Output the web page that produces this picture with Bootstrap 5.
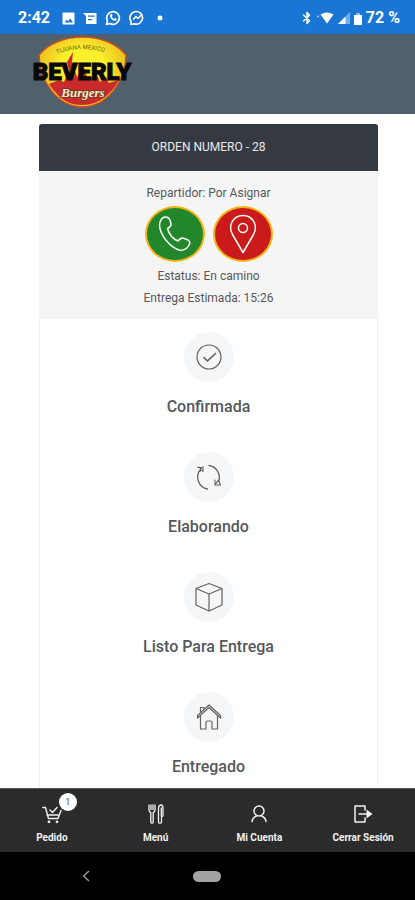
<!DOCTYPE html>
<html lang="es">
<head>
<meta charset="utf-8">
<meta name="viewport" content="width=device-width, initial-scale=1">
<title>Beverly Burgers - Orden</title>
<link href="https://cdn.jsdelivr.net/npm/bootstrap@5.3.0/dist/css/bootstrap.min.css" rel="stylesheet">
<style>
body { font-family: Roboto, "Liberation Sans", sans-serif; color: #55585c; background: #fff; }
svg { display: block; }
.ln { fill: none; stroke: currentColor; stroke-linecap: round; stroke-linejoin: round; }
.status-bar { background: #1976d5; height: 34px; font-size: 16px; line-height: 20px; padding: 2px 15px 0 18px; }
.brand-bar { background: #51606d; height: 80px; padding: 0 32px; }
.order-wrap { padding: 10px 37px 0 39px; }
.order-box { border: 1px solid #f0f1f2; border-top: 0; }
.order-title { background: #353a42; color: #e9eaeb; font-size: 12px; line-height: 15px; padding: 16px 0; margin: 0 -1px; border-radius: 3px 3px 0 0; font-weight: 400; }
.order-info { background: #f5f5f5; font-size: 12px; line-height: 22px; padding: 11px 0 10px; margin: 0 -1px; }
.contact-row { margin: 2px 0 3px; }
.round-btn { width: 60px; height: 56px; border: 2px solid #f4b415; border-radius: 50%; color: #f5fff5; padding: 0; }
.call { background: #22862a; }
.place { background: #cb1a1b; }
.step { padding-top: 13px; height: 120px; }
.step-dot { width: 50px; height: 50px; border-radius: 50%; background: #f5f6f7; color: #606367; }
.step-name { font-size: 16px; line-height: 20px; font-weight: 500; margin: 15px 0 0; }
.tab-bar { background: #2b2b2b; border-top: 1px solid #555; height: 64px; }
.tab-link { color: #f2f2f2; font-size: 10px; line-height: 12px; font-weight: 700; padding-top: 15px; gap: 8px; }
.count { width: 18px; height: 18px; left: 17px; top: -11px; background: #fff; color: #555; font-size: 9px; line-height: 18px; font-weight: 400; }
.system-bar { background: #000; height: 48px; }
.system-btn { color: #999; }
.home-pill { width: 28px; height: 11px; background: #a3a3a3; }
</style>
<script src="https://cdn.jsdelivr.net/npm/bootstrap@5.3.0/dist/js/bootstrap.bundle.min.js"></script>
</head>
<body>
<div class="vh-100 d-flex flex-column overflow-hidden">
  <div class="status-bar d-flex align-items-center justify-content-between text-white flex-shrink-0">
    <div class="d-flex align-items-center gap-2">
      <span class="me-1 fw-bold">2:42</span>
      <svg width="13" height="13" viewBox="0 0 13 13"><path fill="#fff" fill-rule="evenodd" d="M1.500 0.500h10q1 0 1 1v10q0 1-1 1h-10q-1 0-1-1v-10q0-1 1-1zM2.500 10.500h8.500l-2.800-4-2 2.700-1.400-1.700z"/></svg>
      <svg width="14" height="13" viewBox="0 0 14 13"><path fill="#fff" fill-rule="evenodd" d="M0 1h13.500v11H3V4zM5 3.500v1.200h6.500V3.500zM5 7v1.200h4V7z"/></svg>
      <svg width="16" height="16" viewBox="0 0 16 16"><path class="ln" stroke-width="1.700" d="M1.500 14.500l1-3.500a6.300 6.300 0 1 1 2.500 2.500z"/><path fill="#fff" d="M5.500 4.200q1-.8 1.500 0l.6 1.500-.8 1q.8 1.500 2.300 2.200l1-.9 1.700.9q.3 1.300-1.300 1.900-1.500.3-3.700-1.500Q4.300 6.600 5.500 4.200z"/></svg>
      <svg width="16" height="16" viewBox="0 0 16 16"><path class="ln" stroke-width="1.600" d="M2 14.500v-3.200a6.300 6.300 0 1 1 3 2.400z"/><path class="ln" stroke-width="1.600" d="M4.500 9.200l2.400-2.700 2 1.900 2.700-2.600"/></svg>
      <svg class="ms-1" width="6" height="6" viewBox="0 0 6 6"><circle cx="3" cy="3" r="2.500" fill="#fff"/></svg>
    </div>
    <div class="d-flex align-items-center gap-1">
      <svg width="10" height="14" viewBox="0 0 10 14"><path class="ln" stroke-width="1.500" d="M1.500 4l6 5.800L5 12.500v-11l2.500 2.700-6 5.800"/></svg>
      <svg width="18" height="12" viewBox="0 0 18 12"><path fill="#fff" d="M4.500 2.500Q11 -1.500 17.500 2.500L11 11.500z"/><circle cx="2" cy="4.500" r="1" fill="#a9d1f5"/></svg>
      <svg width="12" height="12" viewBox="0 0 12 12"><path fill="#6fb0ec" d="M0 12L12 0v12z"/><path fill="#fff" d="M0 12L7.500 4.500V12z"/></svg>
      <svg width="8" height="13" viewBox="0 0 8 13"><path fill="#8abef0" d="M2 1h4v2H2z"/><path fill="#fff" d="M0 3h8v10H0z"/></svg>
      <span class="fw-bold">72 %</span>
    </div>
  </div>

  <header class="brand-bar flex-shrink-0">
    <a href="#" class="d-inline-block" aria-label="Beverly Burgers">
      <svg width="100" height="76" viewBox="0 0 100 76">
        <defs>
          <radialGradient id="sun" cx=".5" cy=".4" r=".6"><stop offset=".4" stop-color="#fbf02c"/><stop offset="1" stop-color="#e8b01c"/></radialGradient>
          <path id="arc" d="M25 20Q50 10 77 20"/>
        </defs>
        <path d="M7 21C26-3 75-3 94 21C94 46 76 73 50 73C25 73 7 46 7 21z" fill="url(#sun)" stroke="#c0502a" stroke-width="1.500"/>
        <path d="M17 50L27 46L32 48L37 36L35 28L41 18L40 28L45 43L52 33L56 46L64 39L68 48L74 43L77 49L87 46C80 59 68 71 50 71C33 71 24 60 17 50z" fill="#cb2a2c"/>
        <text font-family="Roboto, sans-serif" font-size="6" fill="#6b5a1a"><textPath href="#arc">TIJUANA MEXICO</textPath></text>
        <text x="50" y="46" text-anchor="middle" font-family="Roboto, sans-serif" font-weight="900" font-size="24" fill="#080808" stroke="#080808" stroke-width="1">BEVERLY</text>
        <text x="51" y="63" text-anchor="middle" font-family="Liberation Serif, serif" font-style="italic" font-weight="700" font-size="13" fill="#f7ecd0" stroke="#7c3a22" stroke-width="2" paint-order="stroke">Burgers</text>
      </svg>
    </a>
  </header>

  <main class="order-wrap flex-grow-1 overflow-hidden">
    <section class="order-box text-center">
      <h1 class="order-title">ORDEN NUMERO - 28</h1>
      <div class="order-info">
        <div>Repartidor: Por Asignar</div>
        <div class="contact-row d-flex justify-content-center gap-2">
          <button type="button" class="round-btn call d-flex align-items-center justify-content-center" aria-label="Llamar">
            <svg width="34" height="38" viewBox="0 0 34 38"><path class="ln" stroke-width="1.500" d="M3 5C5 1 10 1 12 5L13 9Q13 12 9.500 13.500C11 19 15 24 20 26Q22 23 25 23L30 25Q33 27 31 30Q28 36 21 35C12 32 4 22 1.800 13Q1 8 3 5z"/></svg>
          </button>
          <button type="button" class="round-btn place d-flex align-items-center justify-content-center" aria-label="Ubicación">
            <svg width="28" height="40" viewBox="0 0 28 40"><path class="ln" stroke-width="1.500" d="M14 38.500L3.500 20.500C-1.500 11 4.500 1.500 14 1.500S29.500 11 24.500 20.500z"/><circle class="ln" stroke-width="1.500" cx="14" cy="14" r="4.500"/></svg>
          </button>
        </div>
        <div>Estatus: En camino</div>
        <div>Entrega Estimada: 15:26</div>
      </div>

      <div class="step d-flex flex-column align-items-center">
        <div class="step-dot d-flex align-items-center justify-content-center">
          <svg width="28" height="28" viewBox="0 0 28 28"><g class="ln" stroke-width="1.200"><circle cx="14" cy="14" r="12"/><path stroke-width="1.700" d="M9 14.500l3.500 3.500 8-7.500"/></g></svg>
        </div>
        <h2 class="step-name">Confirmada</h2>
      </div>
      <div class="step d-flex flex-column align-items-center">
        <div class="step-dot d-flex align-items-center justify-content-center">
          <svg width="28" height="28" viewBox="0 0 28 28"><g class="ln" stroke-width="1.300"><path d="M12.500 26A12 12 0 0 1 5.500 6.500M14 2.500A12 12 0 0 1 24 17"/><path stroke-width="1.100" d="M2.500 4.500h4l-1.500 4M4 4l4 4.500V3.500M20 17v5h5.500M20 22l3.500-5 2 5"/></g></svg>
        </div>
        <h2 class="step-name">Elaborando</h2>
      </div>
      <div class="step d-flex flex-column align-items-center">
        <div class="step-dot d-flex align-items-center justify-content-center">
          <svg width="30" height="30" viewBox="0 0 30 30"><path class="ln" stroke-width="1.200" d="M15 1.500L28 6.500V23L15 29L2 23V6.500zM2 6.500L15 12L28 6.500M15 12V29"/></svg>
        </div>
        <h2 class="step-name">Listo Para Entrega</h2>
      </div>
      <div class="step d-flex flex-column align-items-center">
        <div class="step-dot d-flex align-items-center justify-content-center">
          <svg width="26" height="28" viewBox="0 0 26 28"><g class="ln" stroke-width="1.200"><path d="M1.500 15L13 4.500L24.500 15M1.500 12.500L13 2L24.500 12.500V15M1.500 12.500V15"/><path d="M4.500 12.500V26H10V19.500Q10 18 11.500 18H14.500Q16 18 16 19.500V26H21.500V12.500M4.500 9.500V4.500H8V6.500"/></g></svg>
        </div>
        <h2 class="step-name">Entregado</h2>
      </div>
    </section>
  </main>

  <nav class="tab-bar flex-shrink-0" aria-label="Principal">
    <div class="row g-0 text-center">
      <a href="#" class="col tab-link d-flex flex-column align-items-center text-decoration-none">
        <span class="position-relative">
          <svg width="20" height="20" viewBox="0 0 20 20"><g class="ln" stroke-width="1.400"><path d="M.8 3.500h2.700l3 11h9.500l3-8M5 11h11"/><path d="M8 6l2.500 2.500L15 3.500"/></g><circle cx="7" cy="17.800" r="1.400" fill="currentColor"/><circle cx="15" cy="17.800" r="1.400" fill="currentColor"/></svg>
          <span class="count position-absolute rounded-circle">1</span>
        </span>
        <span>Pedido</span>
      </a>
      <a href="#" class="col tab-link d-flex flex-column align-items-center text-decoration-none">
        <svg width="16" height="20" viewBox="0 0 16 20"><g class="ln" stroke-width="1.300"><path d="M1 1v5q0 2 1.800 2.500V18q0 1.200 1.200 1.200T5.200 18V8.500Q7 8 7 6V1M3 1v4.500M5 1v4.500"/><path d="M10.500 18V4q.5-3 2.500-3t2 3v7.500q0 1-1.500 1V18q0 1.200-1.500 1.200T10.500 18zM13.300 4v8"/></g></svg>
        <span>Menú</span>
      </a>
      <a href="#" class="col tab-link d-flex flex-column align-items-center text-decoration-none">
        <svg width="18" height="20" viewBox="0 0 18 20"><g class="ln" stroke-width="1.500"><circle cx="9" cy="7" r="5"/><path d="M2 17.500Q2.500 13.500 6.500 12M16 17.500Q15.500 13.500 11.500 12"/></g></svg>
        <span>Mi Cuenta</span>
      </a>
      <a href="#" class="col tab-link d-flex flex-column align-items-center text-decoration-none">
        <svg width="20" height="20" viewBox="0 0 20 20"><path class="ln" stroke-width="1.500" d="M12 6V2H2v16h10v-4M6 10h11"/><path fill="currentColor" d="M13.500 5.500L19.500 10L13.500 14.500z"/></svg>
        <span>Cerrar Sesión</span>
      </a>
    </div>
  </nav>

  <div class="system-bar row g-0 align-items-center flex-shrink-0">
    <div class="col-5 d-flex justify-content-center">
      <button type="button" class="system-btn btn border-0 p-0" aria-label="Atrás"><svg width="8" height="12" viewBox="0 0 8 12"><path class="ln" stroke-width="1.500" d="M6.500 1.500L1.500 6L6.500 10.500"/></svg></button>
    </div>
    <div class="col-2 d-flex justify-content-center">
      <button type="button" class="home-pill btn border-0 p-0 rounded-pill" aria-label="Inicio"></button>
    </div>
    <div class="col-5"></div>
  </div>
</div>
</body>
</html>
